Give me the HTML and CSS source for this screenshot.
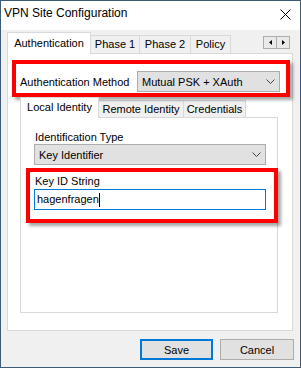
FILE: index.html
```html
<!DOCTYPE html>
<html lang="en">
<head>
  <meta charset="UTF-8" />
  <title>VPN Site Configuration</title>
  <link rel="stylesheet" href="styles.css">
</head>
<body>
  <div class="window">
    <div class="titlebar">
      <span class="title">VPN Site Configuration</span>
      <svg class="close" width="11" height="11" viewBox="0 0 11 11">
        <path d="M0.5 0.5 L10.5 10.5 M10.5 0.5 L0.5 10.5" stroke="#000" stroke-width="1" fill="none"/>
      </svg>
    </div>
    <div class="content">
      <div class="tabstrip">
        <div class="tab active">Authentication</div>
        <div class="tab tab-p1">Phase 1</div>
        <div class="tab tab-p2">Phase 2</div>
        <div class="tab tab-policy">Policy</div>
        <div class="scroller">
          <span class="scroll-btn"><svg width="3" height="5" viewBox="0 0 3 5"><path d="M3 0 L0 2.5 L3 5 Z" fill="#000"/></svg></span>
          <span class="scroll-btn"><svg width="3" height="5" viewBox="0 0 3 5"><path d="M0 0 L3 2.5 L0 5 Z" fill="#000"/></svg></span>
        </div>
      </div>
      <div class="panel outer-panel">
        <div class="method-row">
          <span class="method-label">Authentication Method</span>
          <div class="combo method-combo">
            <span>Mutual PSK + XAuth</span>
            <svg class="chevron" width="9" height="5" viewBox="0 0 9 5"><path d="M0.5 0.5 L4.5 4.5 L8.5 0.5" stroke="#444" fill="none"/></svg>
          </div>
        </div>
        <div class="annot annot-method"></div>

        <div class="inner-tabs">
          <div class="tabstrip inner-strip">
            <div class="tab active tab-local">Local Identity</div>
            <div class="tab tab-remote">Remote Identity</div>
            <div class="tab tab-cred">Credentials</div>
          </div>
          <div class="panel inner-panel">
            <div class="field-label first">Identification Type</div>
            <div class="combo field-box">
              <span>Key Identifier</span>
              <svg class="chevron" width="9" height="5" viewBox="0 0 9 5"><path d="M0.5 0.5 L4.5 4.5 L8.5 0.5" stroke="#444" fill="none"/></svg>
            </div>
            <div class="field-label second">Key ID String</div>
            <div class="edit field-box">hagenfragen<span class="caret"></span></div>
            <div class="annot annot-key"></div>
          </div>
        </div>
      </div>
      <div class="buttons">
        <button class="btn default">Save</button>
        <button class="btn">Cancel</button>
      </div>
    </div>
  </div>
</body>
</html>
```

FILE: styles.css
```css
html, body {
  margin: 0;
  padding: 0;
}
body {
  font-family: "Liberation Sans", Arial, sans-serif;
  font-size: 11px;
  color: #000;
  background: #f0f0f0;
}
.window {
  width: 301px;
  height: 368px;
  box-sizing: border-box;
  border: 1px solid #3d5a78;
  background: #f0f0f0;
}
.titlebar {
  height: 29px;
  background: #fff;
  display: flex;
  align-items: flex-start;
  justify-content: space-between;
  padding: 4px 9px 0 3px;
  box-sizing: border-box;
}
.title {
  font-size: 12px;
  line-height: 16px;
}
.close {
  margin-top: 4px;
}
.content {
  padding: 2px 0 0 6px;
}

/* tabs */
.tabstrip {
  display: flex;
  align-items: flex-end;
  height: 21px;
  width: 286px;
}
.tab {
  box-sizing: border-box;
  height: 18px;
  border: 1px solid #d9d9d9;
  border-bottom: none;
  background: #f0f0f0;
  text-align: center;
  line-height: 17px;
  margin-left: -1px;
  white-space: nowrap;
}
.tab.active {
  height: 22px;
  margin-bottom: -1px;
  margin-left: 0;
  background: #fff;
  position: relative;
  z-index: 1;
  line-height: 20px;
  width: 84px;
}
.tab-p1 { width: 50px; }
.tab-p2 { width: 52px; }
.tab-policy { width: 41px; }
.scroller {
  margin-left: auto;
  margin-right: 3px;
  align-self: flex-start;
  margin-top: 4px;
  display: flex;
}
.scroll-btn {
  width: 14px;
  height: 13px;
  box-sizing: border-box;
  border: 1px solid #adadad;
  background: #e9e9e9;
  display: flex;
  align-items: center;
  justify-content: center;
  margin-left: -1px;
}

.panel {
  background: #fff;
  border: 1px solid #d9d9d9;
  box-sizing: border-box;
  position: relative;
}
.outer-panel {
  width: 286px;
  height: 278px;
}

/* auth method row */
.method-row {
  display: flex;
  align-items: center;
  margin: 17px 0 0 12px;
  height: 21px;
}
.method-label {
  width: 117px;
}
.combo {
  box-sizing: border-box;
  height: 21px;
  border: 1px solid #adadad;
  background: #e1e1e1;
  display: flex;
  align-items: center;
  justify-content: space-between;
  padding: 0 4px 0 4px;
}
.method-combo {
  width: 143px;
}

/* inner tab control */
.inner-tabs {
  margin: 5px 0 0 12px;
}
.inner-strip {
  height: 20px;
  width: 258px;
}
.inner-strip .tab {
  height: 17px;
  line-height: 16px;
}
.inner-strip .tab.active {
  height: 21px;
  line-height: 19px;
  width: 79px;
}
.tab-remote { width: 86px; }
.tab-cred { width: 63px; }
.inner-panel {
  width: 258px;
  height: 196px;
}
.field-label {
  margin-left: 14px;
  line-height: 13px;
}
.field-label.first { margin-top: 13px; }
.field-label.second { margin-top: 10px; margin-bottom: 1px; }
.field-box {
  margin-left: 13px;
  width: 232px;
}
.edit {
  box-sizing: border-box;
  height: 21px;
  border: 1px solid #0078d7;
  background: #fff;
  padding-left: 2px;
  line-height: 19px;
  display: flex;
  align-items: center;
}
.caret {
  display: inline-block;
  width: 1px;
  height: 14px;
  background: #000;
}

/* red annotation frames */
.annot {
  position: absolute;
  border: 4px solid #ff0000;
  box-sizing: border-box;
  box-shadow: 3px 3px 3px rgba(0, 0, 0, 0.35);
  pointer-events: none;
}
.annot-method {
  left: 4px;
  top: 6px;
  width: 278px;
  height: 37px;
}
.annot-key {
  left: 5px;
  top: 50px;
  width: 252px;
  height: 55px;
}

/* dialog buttons */
.buttons {
  display: flex;
  justify-content: flex-end;
  gap: 7px;
  margin-top: 8px;
  padding-right: 6px;
}
.btn {
  font-family: "Liberation Sans", Arial, sans-serif;
  font-size: 11px;
  color: #000;
  width: 74px;
  height: 21px;
  box-sizing: border-box;
  border: 1px solid #adadad;
  background: #e1e1e1;
  padding: 0;
  margin: 0;
}
.btn.default {
  width: 73px;
  border: 2px solid #0078d7;
}
```
